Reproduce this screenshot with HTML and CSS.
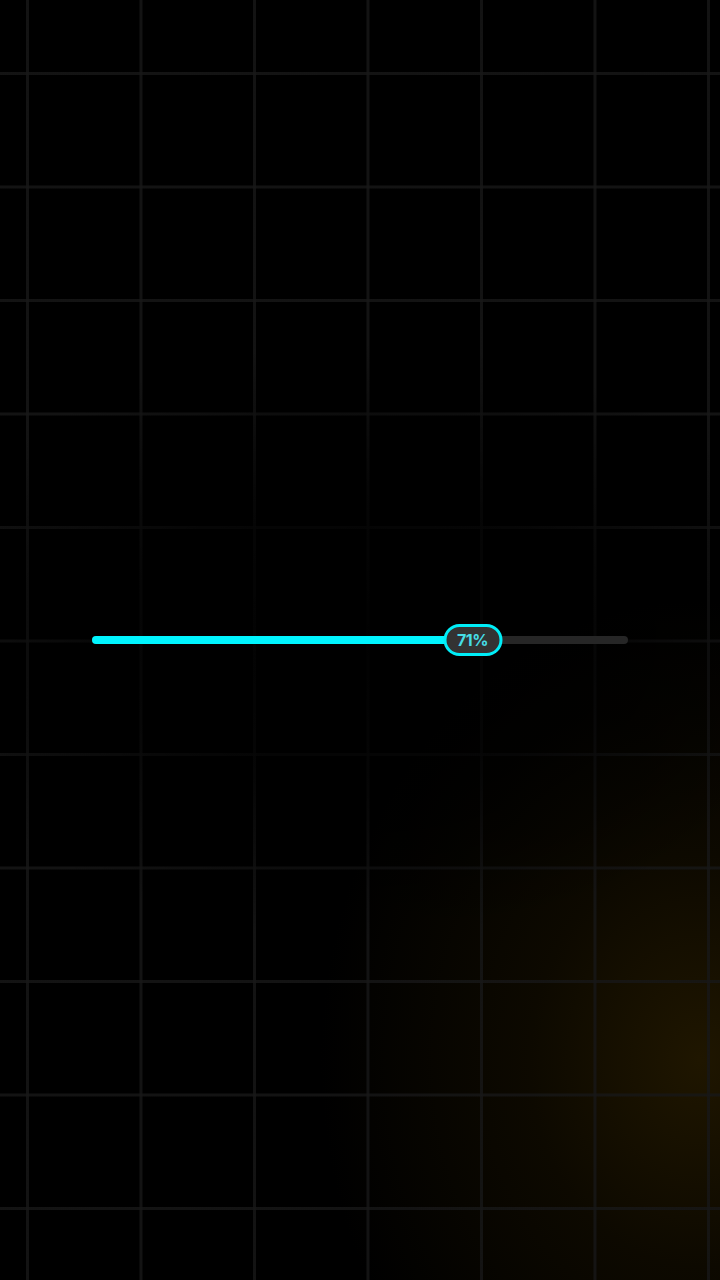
FILE: index.html
```html
<!DOCTYPE html>
<html>
<head>
<meta charset="utf-8">
<link rel="stylesheet" href="styles.css">
</head>
<body>
<div class="stage">
  <div class="glow"></div>
  <div class="grid"></div>
  <div class="shade"></div>
  <div class="slider">
    <div class="track">
      <div class="fill" style="width: 71%"></div>
      <div class="thumb" style="left: 71%">71%</div>
    </div>
  </div>
</div>
</body>
</html>
```
FILE: styles.css
```css
html, body {
  margin: 0;
  padding: 0;
  background: #000;
}
.stage {
  position: relative;
  width: 720px;
  height: 1280px;
  overflow: hidden;
  background-color: #000;
  display: flex;
  align-items: center;
  justify-content: center;
}
.grid {
  position: absolute;
  inset: 0;
  background-image:
    linear-gradient(to right, rgba(24,24,24,0.8) 3px, transparent 3px),
    linear-gradient(to bottom, rgba(24,24,24,0.8) 3px, transparent 3px);
  background-size: 113.5px 113.5px;
  background-position: 26px 72px;
  filter: blur(0.5px);
  z-index: 1;
}
.shade {
  position: absolute;
  inset: 0;
  background: radial-gradient(ellipse 460px 300px at 360px 640px, rgba(0,0,0,0.95) 0%, rgba(0,0,0,0.7) 50%, rgba(0,0,0,0) 100%);
  z-index: 1;
}
.glow {
  position: absolute;
  inset: 0;
  background: radial-gradient(ellipse 380px 460px at 700px 1060px, rgba(62,44,0,0.5) 0%, rgba(40,28,0,0.32) 45%, rgba(0,0,0,0) 100%);
  z-index: 0;
}
.slider {
  position: relative;
  z-index: 2;
  width: 536px;
}
.track {
  position: relative;
  height: 8px;
  border-radius: 4px;
  background: #262626;
}
.fill {
  position: absolute;
  left: 0;
  top: 0;
  bottom: 0;
  background: #00f5ff;
  border-radius: 4px;
}
.thumb {
  position: absolute;
  top: 50%;
  transform: translate(-50%, -50%);
  width: 53px;
  height: 26px;
  box-sizing: content-box;
  border: 3px solid #00eef8;
  border-radius: 16px;
  background: #333;
  color: #46dde6;
  font-family: Inter, "Liberation Sans", sans-serif;
  font-weight: 700;
  font-size: 16px;
  display: flex;
  align-items: center;
  justify-content: center;
  letter-spacing: -0.4px;
}
```
